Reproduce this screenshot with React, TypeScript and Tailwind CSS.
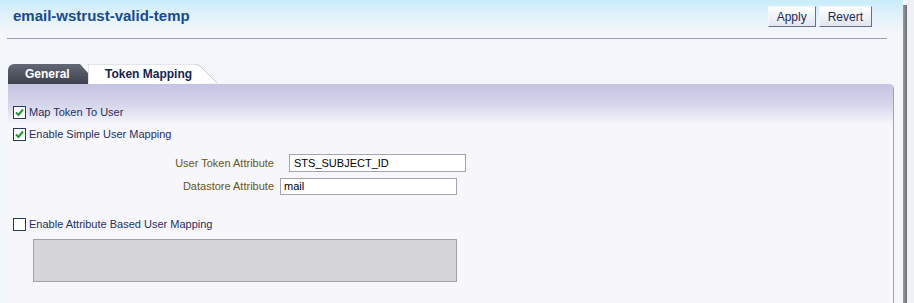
import React from "react";

function Check({ checked }: { checked: boolean }) {
  return (
    <div className="w-[13px] h-[13px] border border-[#1f3d6a] bg-white flex items-center justify-center shrink-0">
      {checked && (
        <svg width="9" height="9" viewBox="0 0 9 9">
          <path d="M1 4.5 L3.5 7 L8 1.5" fill="none" stroke="#1e9a2e" strokeWidth="2" />
        </svg>
      )}
    </div>
  );
}

function Btn({ label }: { label: string }) {
  return (
    <button className="h-[21px] px-[8px] border border-t-[#f4f6fa] border-l-[#f4f6fa] border-b-[#6b6f80] border-r-[#6b6f80] bg-gradient-to-b from-[#ffffff] to-[#e2e6ee] text-[12px] text-[#1b2b5c] leading-none">
      {label}
    </button>
  );
}

export default function App() {
  return (
    <div
      className="w-[914px] h-[303px] overflow-hidden flex bg-[#f3f6fa] text-[11px]"
      style={{ fontFamily: '"Liberation Sans", Arial, sans-serif' }}
    >
      <div className="w-[903px] shrink-0 flex flex-col">
        {/* header */}
        <div className="h-[32px] flex items-start justify-between bg-gradient-to-b from-[#c8ecfb] via-[#e2f2fa] to-[#f3f6fa] pl-[13px] pr-[31px]">
          <div className="pt-[6px] text-[15px] font-bold text-[#174b8f] leading-[20px]">email-wstrust-valid-temp</div>
          <div className="flex gap-[3px] pt-[6px]">
            <Btn label="Apply" />
            <Btn label="Revert" />
          </div>
        </div>
        <div className="mt-[6px] ml-[7px] mr-[16px] h-px bg-[#9a9cb0]" />
        {/* tabs */}
        <div className="mt-[25px] ml-[8px] flex h-[20px] items-end">
          <div className="relative w-[80px] h-[20px] rounded-tl-[6px] bg-gradient-to-b from-[#646875] to-[#3e424d] [clip-path:polygon(0_0,72px_0,80px_9px,80px_20px,0_20px)] flex items-center pl-[17px] text-[12px] font-bold text-white">
            General
          </div>
          <div className="relative w-[132px] h-[20px] flex items-center pl-[17px] text-[12px] font-bold text-[#13254f]">
            <svg className="absolute inset-0" width="132" height="20" viewBox="0 0 132 20">
              <path d="M0 20 L0 0 L106 0 Q110 0 113 3 L129 19" fill="#ffffff" stroke="#c8cad4" strokeWidth="1" />
            </svg>
            <span className="relative">Token Mapping</span>
          </div>
        </div>
        {/* panel */}
        <div className="ml-[8px] w-[886px] flex-1 border-r border-[#a0a2ac] rounded-tr-[5px] bg-[#f6f6fb] flex flex-col">
          <div className="h-[40px] rounded-tr-[5px] bg-gradient-to-b from-[#c4c4e2] via-[#d4d4eb] to-[#f6f6fb] -mb-[40px]" />
          <div className="relative flex flex-col pl-[5px]">
            <div className="mt-[22px] flex items-center gap-[3px] h-[13px]">
              <Check checked />
              <span className="text-[#26305e] text-[11px]">Map Token To User</span>
            </div>
            <div className="mt-[9px] flex items-center gap-[3px] h-[13px]">
              <Check checked />
              <span className="text-[#26305e] text-[11px]">Enable Simple User Mapping</span>
            </div>
            <div className="mt-[13px] flex items-center h-[18px]">
              <span className="w-[261px] text-right text-[#6a5616] text-[11px]">User Token Attribute</span>
              <div className="ml-[15px] w-[177px] h-[18px] border border-[#a4a6ae] bg-white flex items-center pl-[4px] text-[11px] text-black">
                STS_SUBJECT_ID
              </div>
            </div>
            <div className="mt-[6px] flex items-center h-[17px]">
              <span className="w-[261px] text-right text-[#6a5616] text-[11px]">Datastore Attribute</span>
              <div className="ml-[6px] w-[177px] h-[17px] border border-[#a4a6ae] bg-white flex items-center pl-[3px] text-[11px] text-black">
                mail
              </div>
            </div>
            <div className="mt-[23px] flex items-center gap-[3px] h-[13px]">
              <Check checked={false} />
              <span className="text-[#26305e] text-[11px]">Enable Attribute Based User Mapping</span>
            </div>
            <div className="mt-[8px] ml-[20px] w-[424px] h-[43px] border border-[#a2a2a6] bg-[#d6d6da]" />
          </div>
        </div>
      </div>
      <div className="pt-[5px] flex">
        <div className="w-[4px] h-full bg-gradient-to-r from-[#9a9aa4] to-[#6c6c74]" />
      </div>
      <div className="flex-1 bg-[#eef2f6]" />
    </div>
  );
}
